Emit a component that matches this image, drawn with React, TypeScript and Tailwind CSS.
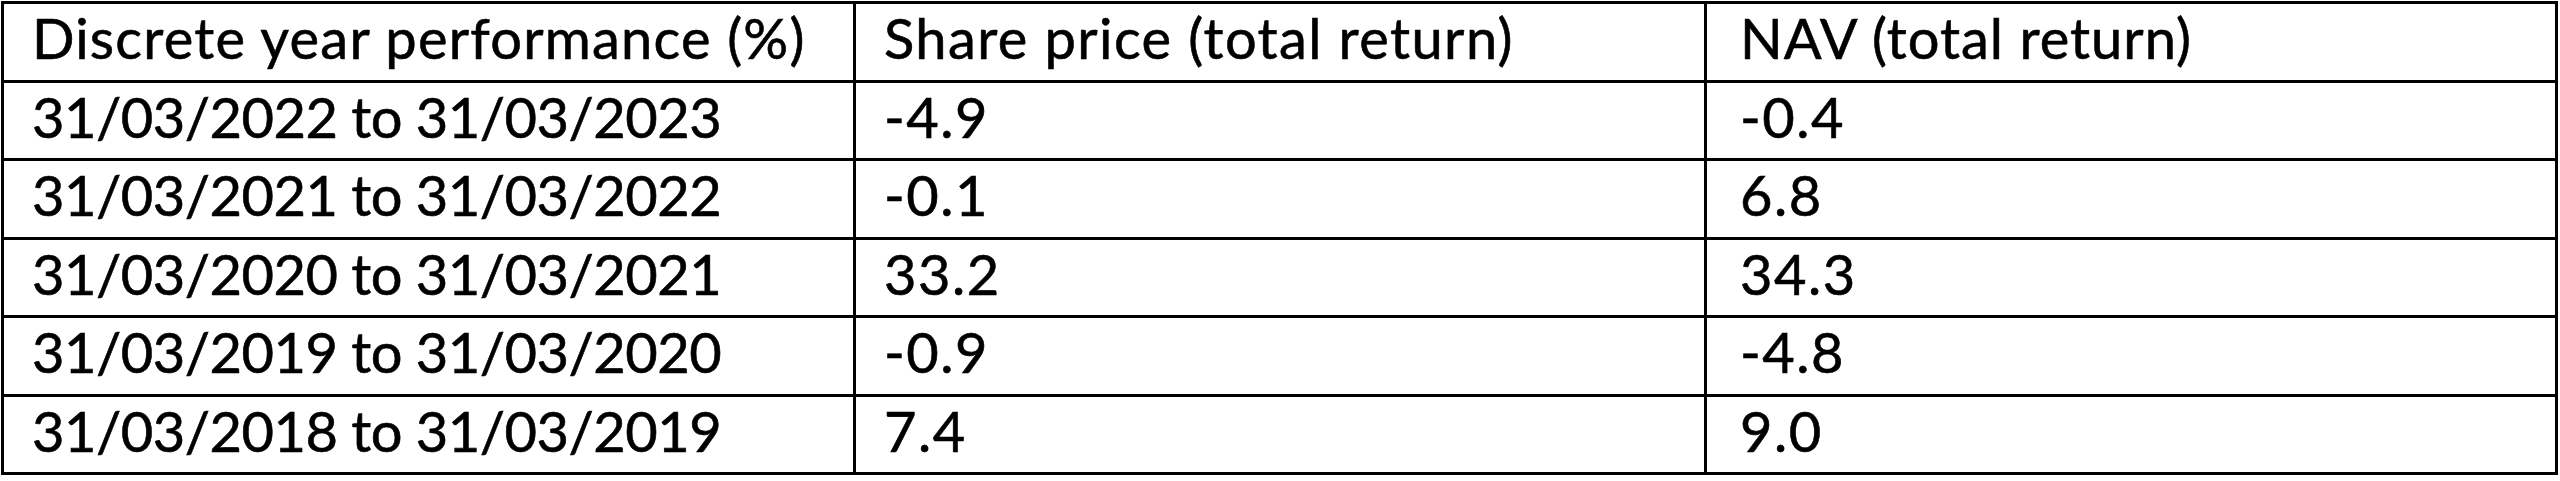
import React from "react";

const header: [string, string, string] = [
  "Discrete year performance (%)",
  "Share price (total return)",
  "NAV (total return)",
];

const rows: [string, string, string][] = [
  ["31/03/2022 to 31/03/2023", "-4.9", "-0.4"],
  ["31/03/2021 to 31/03/2022", "-0.1", "6.8"],
  ["31/03/2020 to 31/03/2021", "33.2", "34.3"],
  ["31/03/2019 to 31/03/2020", "-0.9", "-4.8"],
  ["31/03/2018 to 31/03/2019", "7.4", "9.0"],
];

const cell =
  "h-[78.5px] border-r-[3px] border-b-[3px] border-black flex items-center pb-[8px] leading-[1.2] whitespace-nowrap";

export default function App() {
  return (
    <div className="w-[2560px] h-[481px] bg-white pl-px pt-px">
      <div
        className="w-[2557px] grid grid-cols-[852px_851px_1fr] border-t-[3px] border-l-[3px] border-black text-black text-[56px] [-webkit-text-stroke:0.6px_black]"
        style={{ fontFamily: "Lato, 'Noto Sans', sans-serif" }}
      >
        <div className={`${cell} pl-[28px] tracking-[1.2px]`}>{header[0]}</div>
        <div className={`${cell} pl-[28px] tracking-[1.4px]`}>{header[1]}</div>
        <div className={`${cell} pl-[33px] tracking-[1px]`}>{header[2]}</div>
        {rows.map((r, i) => (
          <React.Fragment key={i}>
            <div className={`${cell} pl-[28px] tracking-[-0.5px]`}>{r[0]}</div>
            <div className={`${cell} pl-[28px] tracking-[1.5px]`}>{r[1]}</div>
            <div className={`${cell} pl-[33px] tracking-[1.5px]`}>{r[2]}</div>
          </React.Fragment>
        ))}
      </div>
    </div>
  );
}
